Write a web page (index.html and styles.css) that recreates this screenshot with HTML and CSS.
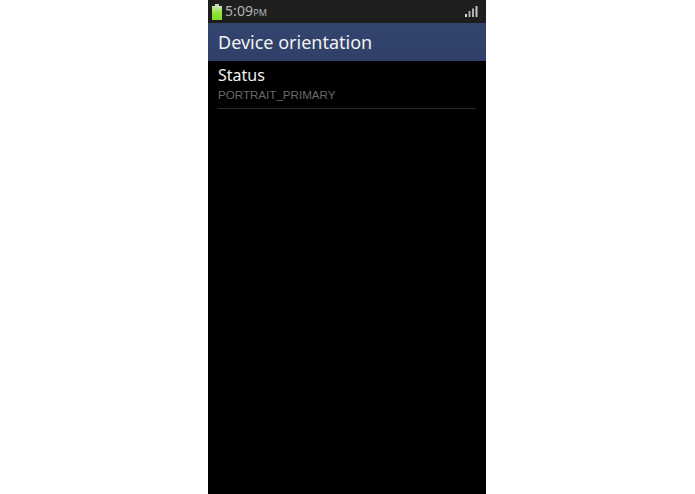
FILE: index.html
```html
<!DOCTYPE html>
<html>
  <head>
    <meta charset="UTF-8">
    <title>Device orientation</title>
    <link rel="stylesheet" href="styles.css">
  </head>
  <body>
    <div class="phone">
      <div class="status-bar">
        <svg class="battery" width="10" height="16" viewBox="0 0 10 16">
          <defs>
            <linearGradient id="charge" x1="0" y1="0" x2="0" y2="1">
              <stop offset="0" stop-color="#cfe6bc"/>
              <stop offset="0.22" stop-color="#b0e680"/>
              <stop offset="0.5" stop-color="#8fe63a"/>
              <stop offset="1" stop-color="#7ddc22"/>
            </linearGradient>
          </defs>
          <rect x="3" y="0" width="4" height="2" fill="#c9d6c0"/>
          <rect x="0" y="2" width="10" height="14" fill="url(#charge)"/>
        </svg>
        <span class="clock">5:09<span class="ampm">PM</span></span>
        <svg class="signal" width="13" height="11" viewBox="0 0 13 11">
          <rect x="0" y="8" width="2" height="3" fill="#d4d4d4"/>
          <rect x="3.5" y="5" width="2" height="6" fill="#b0b0b0"/>
          <rect x="7" y="2.5" width="2" height="8.5" fill="#b0b0b0"/>
          <rect x="10.5" y="0" width="2" height="11" fill="#c4c4c4"/>
        </svg>
      </div>
      <div class="title-bar">Device orientation</div>
      <div class="list-item">
        <div class="item-title">Status</div>
        <div class="item-value">PORTRAIT_PRIMARY</div>
      </div>
    </div>
  </body>
</html>
```

FILE: styles.css
```css
html, body {
  margin: 0;
  height: 100%;
  background: #fff;
}
body {
  display: flex;
  justify-content: center;
  font-family: "Noto Sans", "Liberation Sans", sans-serif;
  overflow: hidden;
}
.phone {
  width: 278px;
  height: 494px;
  margin-left: -1px;
  background: #000;
}
.status-bar {
  height: 23px;
  display: flex;
  align-items: center;
  padding: 0 8px 0 4px;
  background: #1e1e1e;
}
.battery {
  display: block;
}
.clock {
  margin-left: 3px;
  margin-top: -2px;
  color: #b4b4b4;
  font-size: 14px;
  letter-spacing: 0.1px;
}
.ampm {
  font-size: 9px;
}
.signal {
  display: block;
  margin-left: auto;
}
.title-bar {
  height: 38px;
  padding-left: 10px;
  line-height: 38px;
  background: linear-gradient(#33456f, #2f3f68);
  color: #f2f2f2;
  font-size: 18px;
}
.list-item {
  margin: 0 10px;
  height: 47px;
  border-bottom: 1px solid #2c2c2c;
}
.item-title {
  padding-top: 4px;
  color: #f0f0f0;
  font-size: 16px;
  line-height: 20px;
}
.item-value {
  margin-top: 2px;
  color: #6a6a6a;
  font-family: "Liberation Sans", Arial, sans-serif;
  font-size: 11.6px;
  line-height: 16px;
}
```
